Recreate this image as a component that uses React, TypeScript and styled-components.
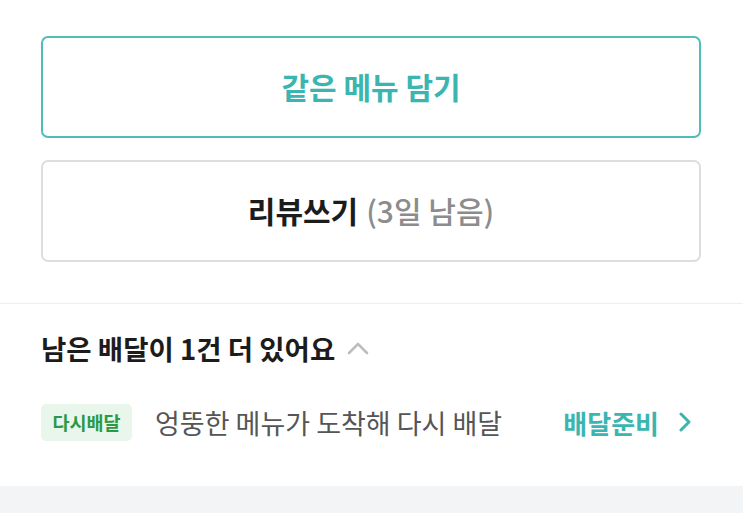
import React from "react";
import styled, { createGlobalStyle } from "styled-components";

const GlobalStyle = createGlobalStyle`
	html, body {
		margin: 0;
		padding: 0;
		background: #ffffff;
	}
	body {
		font-family: "Noto Sans CJK KR", "Noto Sans", sans-serif;
		-webkit-font-smoothing: antialiased;
	}
`;

const Page = styled.div`
	width: 743px;
	height: 513px;
	display: flex;
	flex-direction: column;
	overflow: hidden;
	background: #ffffff;
`;

const ButtonArea = styled.div`
	display: flex;
	flex-direction: column;
	gap: 22px;
	padding: 36px 42px 41px 41px;
	border-bottom: 1px solid #eeeeee;
`;

const ActionButton = styled.button<{ primary?: boolean }>`
	height: 102px;
	width: 100%;
	border-radius: 7px;
	border: 2px solid ${(props) => (props.primary ? "#52bdb7" : "#dedede")};
	background: #ffffff;
	display: flex;
	align-items: center;
	justify-content: center;
	font-family: inherit;
	font-size: 30px;
	font-weight: 700;
	color: ${(props) => (props.primary ? "#3bb5b0" : "#1c1c1c")};
	cursor: pointer;
	padding: 0 0 3px;
`;

const Muted = styled.span`
	color: #8c8c8c;
	font-weight: 500;
	margin-left: 8px;
`;

const DeliverySection = styled.section`
	display: flex;
	flex-direction: column;
	padding: 26px 42px 0 41px;
	height: 182px;
	box-sizing: border-box;
`;

const SectionTitle = styled.h3`
	margin: 0;
	display: flex;
	align-items: center;
	gap: 12px;
	font-size: 27.5px;
	font-weight: 700;
	color: #1c1c1c;
	height: 36px;
`;

const DeliveryRow = styled.div`
	margin-top: 37px;
	display: flex;
	align-items: center;
	height: 38px;
`;

const Tag = styled.span`
	display: inline-flex;
	align-items: center;
	justify-content: center;
	height: 37px;
	width: 91px;
	border-radius: 5px;
	background: #e9f6ec;
	color: #2a9a48;
	font-size: 18.5px;
	font-weight: 700;
`;

const Description = styled.span`
	margin-left: 23px;
	flex: 1;
	font-size: 27px;
	font-weight: 400;
	color: #555555;
`;

const StatusLink = styled.a`
	display: flex;
	align-items: center;
	gap: 20px;
	font-size: 26px;
	font-weight: 700;
	color: #3bb5b0;
	margin-right: 10px;
`;

const BottomBand = styled.div`
	flex: 1;
	background: #f3f4f6;
`;

const ChevronUp = () => (
	<svg width="22" height="14" viewBox="0 0 22 14" fill="none">
		<path d="M2 12 L11 3 L20 12" stroke="#bdbdbd" strokeWidth="2.6" strokeLinecap="round" strokeLinejoin="round" />
	</svg>
);

const ChevronRight = () => (
	<svg width="12" height="20" viewBox="0 0 12 20" fill="none">
		<path d="M2 2 L10 10 L2 18" stroke="#3bb5b0" strokeWidth="3" strokeLinecap="round" strokeLinejoin="round" />
	</svg>
);

const App = () => {
	return (
		<>
			<GlobalStyle />
			<Page>
				<ButtonArea>
					<ActionButton primary>같은 메뉴 담기</ActionButton>
					<ActionButton>
						리뷰쓰기<Muted>(3일 남음)</Muted>
					</ActionButton>
				</ButtonArea>
				<DeliverySection>
					<SectionTitle>
						남은 배달이 1건 더 있어요
						<ChevronUp />
					</SectionTitle>
					<DeliveryRow>
						<Tag>다시배달</Tag>
						<Description>엉뚱한 메뉴가 도착해 다시 배달</Description>
						<StatusLink>
							배달준비
							<ChevronRight />
						</StatusLink>
					</DeliveryRow>
				</DeliverySection>
				<BottomBand />
			</Page>
		</>
	);
};

export default App;
